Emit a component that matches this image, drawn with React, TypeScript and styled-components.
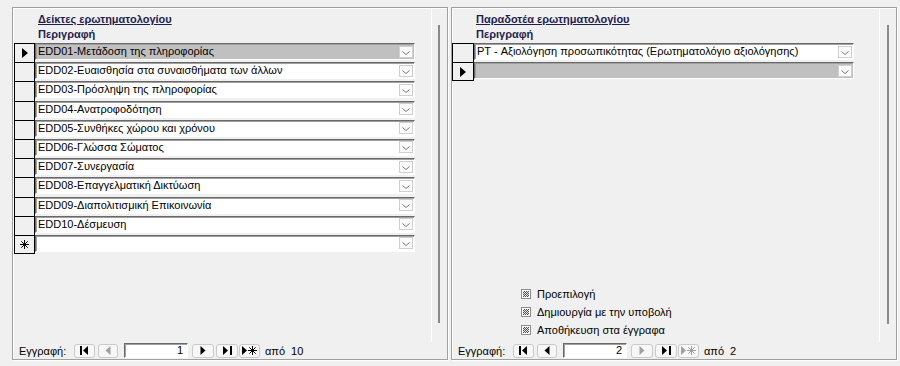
import React from 'react';
import styled, { createGlobalStyle } from 'styled-components';

const GlobalStyle = createGlobalStyle`
  html, body { margin: 0; padding: 0; background: #f0f0f0; }
  body {
    font-family: "Liberation Sans", Arial, sans-serif;
    font-size: 11px;
    color: #000;
  }
`;

const Screen = styled.div`
  width: 900px;
  height: 366px;
  box-sizing: border-box;
  padding: 7px 0 0 12px;
  display: flex;
  align-items: flex-start;
  gap: 3px;
  background: #f0f0f0;
  overflow: hidden;
`;

const Panel = styled.section<{ $w: number }>`
  width: ${p => p.$w}px;
  height: 353px;
  box-sizing: border-box;
  border: 1px solid #a0a0a0;
  box-shadow: inset 1px 1px 0 #fff, 1px 1px 0 #fff;
  display: flex;
  flex-direction: column;
`;

const Body = styled.div`
  height: 334px;
  display: flex;
`;

const Main = styled.div<{ $w: number; $pl: number }>`
  width: ${p => p.$w}px;
  box-sizing: border-box;
  border-right: 1px solid #fff;
  padding: 4px 0 0 ${p => p.$pl}px;
  display: flex;
  flex-direction: column;
`;

const Gutter = styled.div<{ $ml: number }>`
  flex: 1;
  padding-left: ${p => p.$ml}px;
`;

const ScrollBar = styled.div<{ $h: number }>`
  width: 2px;
  height: ${p => p.$h}px;
  margin-top: 17px;
  background: #8a8a8a;
`;

const Title = styled.div`
  padding-left: 24px;
  font-weight: bold;
  line-height: 15px;
  color: #1e1e4e;
  text-decoration: underline;
`;

const Caption = styled.div`
  padding-left: 24px;
  font-weight: bold;
  line-height: 15px;
  color: #1e1e4e;
`;

const Rows = styled.div`
  margin-top: 1px;
  display: flex;
  flex-direction: column;
`;

const Row = styled.div`
  display: flex;
  height: 19.2px;
`;

const Selector = styled.div<{ $w: number; $last?: boolean }>`
  width: ${p => p.$w}px;
  box-sizing: border-box;
  border-left: 1px solid #000;
  border-right: 1px solid #000;
  border-top: 1px solid #000;
  border-bottom: ${p => (p.$last ? '1px solid #000' : 'none')};
  display: flex;
  align-items: center;
  justify-content: center;
`;

const Field = styled.div<{ $current?: boolean }>`
  width: 380px;
  height: 17px;
  box-sizing: border-box;
  border-top: 1px solid #696969;
  border-left: 1px solid #696969;
  border-right: 1px solid #fff;
  border-bottom: 1px solid #fff;
  box-shadow: inset 1px 1px 0 #a0a0a0;
  background: ${p => (p.$current ? '#c0c0c0' : '#fff')};
  display: flex;
  align-items: center;
`;

const FieldText = styled.span`
  flex: 1;
  padding-left: 2px;
  line-height: 15px;
  white-space: nowrap;
  overflow: hidden;
`;

const DropButton = styled.div`
  width: 14px;
  height: 12px;
  box-sizing: border-box;
  margin: 0 1px 0 0;
  border: 1px solid #cfcfcf;
  background: #fbfbfb;
  display: flex;
  align-items: flex-end;
  justify-content: center;
  padding-bottom: 2px;
`;

const Options = styled.div`
  margin-top: auto;
  margin-bottom: 3px;
  padding-left: 69px;
  display: flex;
  flex-direction: column;
`;

const Option = styled.div`
  height: 18px;
  display: flex;
  align-items: center;
  gap: 6px;
`;

const TriBox = styled.span`
  width: 10px;
  height: 10px;
  box-sizing: border-box;
  border: 1px solid #8c8c8c;
  padding: 1px;
  background: #fff;
  &::after {
    content: '';
    display: block;
    width: 6px;
    height: 6px;
    background: repeating-conic-gradient(#505050 0 25%, #e6e6e6 0 50%) 0 0 / 2px 2px;
  }
`;

const Nav = styled.div<{ $pl: number }>`
  flex: 1;
  display: flex;
  align-items: center;
  padding-left: ${p => p.$pl}px;
`;

const NavLabel = styled.span`
  width: 55px;
  line-height: 14px;
`;

const NavBtn = styled.div<{ $w: number; $ml?: number }>`
  width: ${p => p.$w}px;
  height: 14px;
  box-sizing: border-box;
  margin-left: ${p => p.$ml ?? 0}px;
  border: 1px solid #cacaca;
  border-radius: 3px;
  background: #f7f7f7;
  display: flex;
  align-items: center;
  justify-content: center;
`;

const RecordBox = styled.div`
  width: 64px;
  height: 15px;
  box-sizing: border-box;
  margin-left: 6px;
  border-top: 1px solid #696969;
  border-left: 1px solid #696969;
  border-right: 1px solid #fff;
  border-bottom: 1px solid #fff;
  box-shadow: inset 1px 1px 0 #a0a0a0;
  background: #fff;
  text-align: right;
  padding-right: 4px;
  line-height: 13px;
`;

const NavText = styled.span<{ $ml: number }>`
  margin-left: ${p => p.$ml}px;
  line-height: 14px;
`;

const ON = '#000';
const OFF = '#a0a0a0';

const Chevron = () => (
  <svg width="8" height="4" viewBox="0 0 8 4">
    <polyline points="0.5,0.5 4,3.5 7.5,0.5" fill="none" stroke="#7a7a7a" strokeWidth="1" />
  </svg>
);

const Pointer = () => (
  <svg width="6" height="10" viewBox="0 0 6 10">
    <polygon points="0,0 6,5 0,10" fill="#000" />
  </svg>
);

const Star = ({ color = '#000' }: { color?: string }) => (
  <svg width="9" height="9" viewBox="0 0 9 9">
    <g stroke={color} strokeWidth="1">
      <line x1="4.5" y1="0" x2="4.5" y2="9" />
      <line x1="0" y1="4.5" x2="9" y2="4.5" />
      <line x1="1.3" y1="1.3" x2="7.7" y2="7.7" />
      <line x1="7.7" y1="1.3" x2="1.3" y2="7.7" />
    </g>
  </svg>
);

const FirstIcon = ({ c }: { c: string }) => (
  <svg width="9" height="9" viewBox="0 0 9 9">
    <rect x="0" y="0" width="2" height="9" fill={c} />
    <polygon points="8,0 8,9 3,4.5" fill={c} />
  </svg>
);

const PrevIcon = ({ c }: { c: string }) => (
  <svg width="6" height="9" viewBox="0 0 6 9">
    <polygon points="5.5,0 5.5,9 0.5,4.5" fill={c} />
  </svg>
);

const NextIcon = ({ c }: { c: string }) => (
  <svg width="6" height="9" viewBox="0 0 6 9">
    <polygon points="0.5,0 0.5,9 5.5,4.5" fill={c} />
  </svg>
);

const LastIcon = ({ c }: { c: string }) => (
  <svg width="9" height="9" viewBox="0 0 9 9">
    <polygon points="0,0 0,9 5,4.5" fill={c} />
    <rect x="7" y="0" width="2" height="9" fill={c} />
  </svg>
);

const NewIcon = ({ c }: { c: string }) => (
  <svg width="15" height="9" viewBox="0 0 15 9">
    <polygon points="0,0 0,9 5,4.5" fill={c} />
    <g stroke={c} strokeWidth="1">
      <line x1="10.5" y1="0" x2="10.5" y2="9" />
      <line x1="6" y1="4.5" x2="15" y2="4.5" />
      <line x1="7.3" y1="1.3" x2="13.7" y2="7.7" />
      <line x1="13.7" y1="1.3" x2="7.3" y2="7.7" />
    </g>
  </svg>
);

type Rec = { text: string; current?: boolean; isNew?: boolean };

const indicators: Rec[] = [
  { text: 'EDD01-Μετάδοση της πληροφορίας', current: true },
  { text: 'EDD02-Ευαισθησία στα συναισθήματα των άλλων' },
  { text: 'EDD03-Πρόσληψη της πληροφορίας' },
  { text: 'EDD04-Ανατροφοδότηση' },
  { text: 'EDD05-Συνθήκες χώρου και χρόνου' },
  { text: 'EDD06-Γλώσσα Σώματος' },
  { text: 'EDD07-Συνεργασία' },
  { text: 'EDD08-Επαγγελματική Δικτύωση' },
  { text: 'EDD09-Διαπολιτισμική Επικοινωνία' },
  { text: 'EDD10-Δέσμευση' },
  { text: '', isNew: true },
];

const deliverables: Rec[] = [
  { text: 'PT - Αξιολόγηση προσωπικότητας (Ερωτηματολόγιο αξιολόγησης)' },
  { text: '', current: true, isNew: true },
];

function RecordList({ items, selW }: { items: Rec[]; selW: number }) {
  return (
    <Rows>
      {items.map((r, i) => (
        <Row key={i}>
          <Selector $w={selW} $last={i === items.length - 1}>
            {r.current ? <Pointer /> : r.isNew ? <Star /> : null}
          </Selector>
          <Field $current={r.current}>
            <FieldText>{r.text}</FieldText>
            <DropButton>
              <Chevron />
            </DropButton>
          </Field>
        </Row>
      ))}
    </Rows>
  );
}

type NavProps = {
  pl: number;
  value: string;
  total: string;
  first: boolean;
  prev: boolean;
  next: boolean;
  last: boolean;
  add: boolean;
};

function Navigator({ pl, value, total, first, prev, next, last, add }: NavProps) {
  return (
    <Nav $pl={pl}>
      <NavLabel>Εγγραφή:</NavLabel>
      <NavBtn $w={21}><FirstIcon c={first ? ON : OFF} /></NavBtn>
      <NavBtn $w={20} $ml={3}><PrevIcon c={prev ? ON : OFF} /></NavBtn>
      <RecordBox>{value}</RecordBox>
      <NavBtn $w={22} $ml={4}><NextIcon c={next ? ON : OFF} /></NavBtn>
      <NavBtn $w={22} $ml={2}><LastIcon c={last ? ON : OFF} /></NavBtn>
      <NavBtn $w={21} $ml={1}><NewIcon c={add ? ON : OFF} /></NavBtn>
      <NavText $ml={5}>από</NavText>
      <NavText $ml={6}>{total}</NavText>
    </Nav>
  );
}

export default function App() {
  return (
    <>
      <GlobalStyle />
      <Screen>
        <Panel $w={436}>
          <Body>
            <Main $w={419} $pl={1}>
              <Title>Δείκτες ερωτηματολογίου</Title>
              <Caption>Περιγραφή</Caption>
              <RecordList items={indicators} selW={21} />
            </Main>
            <Gutter $ml={6}>
              <ScrollBar $h={298} />
            </Gutter>
          </Body>
          <Navigator pl={6} value="1" total="10" first prev={false} next last add />
        </Panel>

        <Panel $w={446}>
          <Body>
            <Main $w={428} $pl={0}>
              <Title>Παραδοτέα ερωτηματολογίου</Title>
              <Caption>Περιγραφή</Caption>
              <RecordList items={deliverables} selW={22} />
              <Options>
                <Option><TriBox />Προεπιλογή</Option>
                <Option><TriBox />Δημιουργία με την υποβολή</Option>
                <Option><TriBox />Αποθήκευση στα έγγραφα</Option>
              </Options>
            </Main>
            <Gutter $ml={7}>
              <ScrollBar $h={299} />
            </Gutter>
          </Body>
          <Navigator pl={6} value="2" total="2" first prev next={false} last add={false} />
        </Panel>
      </Screen>
    </>
  );
}
